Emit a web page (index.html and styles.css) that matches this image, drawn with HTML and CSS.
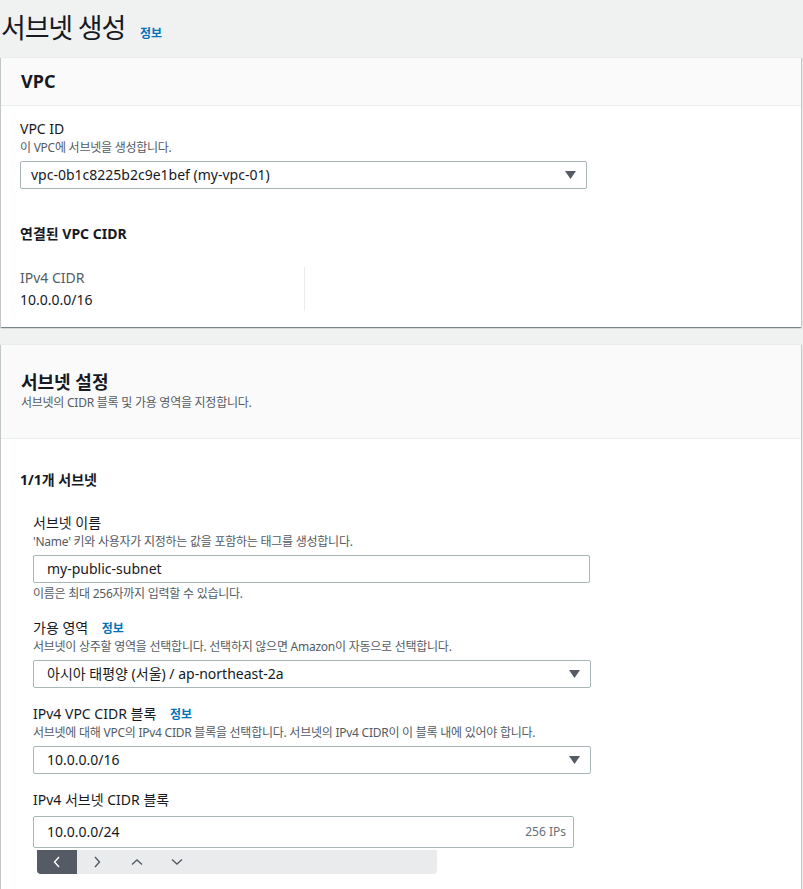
FILE: index.html
```html
<!DOCTYPE html>
<html lang="ko">
<head>
<meta charset="utf-8">
<title>서브넷 생성</title>
<link rel="stylesheet" href="styles.css">
</head>
<body>
<div class="page-header">
  <h1 class="page-title">서브넷 생성</h1>
  <a class="info-link" href="#">정보</a>
</div>

<section class="card card-vpc">
  <header class="card-header">
    <h2 class="card-title">VPC</h2>
  </header>
  <div class="card-body vpc-body">
    <div class="field">
      <div class="label">VPC ID</div>
      <div class="desc">이 VPC에 서브넷을 생성합니다.</div>
      <div class="select select-wide">
        <span>vpc-0b1c8225b2c9e1bef (my-vpc-01)</span>
        <svg class="caret" width="11" height="8" viewBox="0 0 11 8"><path d="M0 0H11L5.5 8Z" fill="#545b64"/></svg>
      </div>
    </div>
    <h3 class="sub-heading">연결된 VPC CIDR</h3>
    <div class="kv-grid">
      <div class="kv">
        <div class="kv-key">IPv4 CIDR</div>
        <div class="kv-value">10.0.0.0/16</div>
      </div>
      <div class="kv"></div>
    </div>
  </div>
</section>

<section class="card card-subnet">
  <header class="card-header header-desc">
    <h2 class="card-title">서브넷 설정</h2>
    <div class="desc">서브넷의 CIDR 블록 및 가용 영역을 지정합니다.</div>
  </header>
  <div class="card-body subnet-body">
    <h3 class="sub-heading">1/1개 서브넷</h3>
    <div class="subnet-fields">
      <div class="field">
        <div class="label">서브넷 이름</div>
        <div class="desc">'Name' 키와 사용자가 지정하는 값을 포함하는 태그를 생성합니다.</div>
        <div class="input">my-public-subnet</div>
        <div class="hint">이름은 최대 256자까지 입력할 수 있습니다.</div>
      </div>
      <div class="field">
        <div class="label">가용 영역 <a class="info-link" href="#">정보</a></div>
        <div class="desc">서브넷이 상주할 영역을 선택합니다. 선택하지 않으면 Amazon이 자동으로 선택합니다.</div>
        <div class="select">
          <span>아시아 태평양 (서울) / ap-northeast-2a</span>
          <svg class="caret" width="11" height="8" viewBox="0 0 11 8"><path d="M0 0H11L5.5 8Z" fill="#545b64"/></svg>
        </div>
      </div>
      <div class="field">
        <div class="label">IPv4 VPC CIDR 블록 <a class="info-link" href="#">정보</a></div>
        <div class="desc">서브넷에 대해 VPC의 IPv4 CIDR 블록을 선택합니다. 서브넷의 IPv4 CIDR이 이 블록 내에 있어야 합니다.</div>
        <div class="select">
          <span>10.0.0.0/16</span>
          <svg class="caret" width="11" height="8" viewBox="0 0 11 8"><path d="M0 0H11L5.5 8Z" fill="#545b64"/></svg>
        </div>
      </div>
      <div class="field field-cidr">
        <div class="label">IPv4 서브넷 CIDR 블록</div>
        <div class="input input-cidr">
          <span>10.0.0.0/24</span>
          <span class="ips">256 IPs</span>
        </div>
        <div class="toolbar">
          <div class="tb-btn active"><svg width="10" height="12" viewBox="0 0 10 12"><path d="M7 1L2.5 6L7 11" fill="none" stroke="#fff" stroke-width="1.4"/></svg></div>
          <div class="tb-btn"><svg width="10" height="12" viewBox="0 0 10 12"><path d="M3 1L7.5 6L3 11" fill="none" stroke="#545b64" stroke-width="1.4"/></svg></div>
          <div class="tb-btn"><svg width="12" height="10" viewBox="0 0 12 10"><path d="M1 7.5L6 3L11 7.5" fill="none" stroke="#545b64" stroke-width="1.4"/></svg></div>
          <div class="tb-btn"><svg width="12" height="10" viewBox="0 0 12 10"><path d="M1 2.5L6 7L11 2.5" fill="none" stroke="#545b64" stroke-width="1.4"/></svg></div>
        </div>
      </div>
    </div>
  </div>
</section>
</body>
</html>
```
FILE: styles.css
```css
* { box-sizing: border-box; }

body {
  margin: 0;
  background: #f0f1f1;
  color: #16191f;
  font-family: "Noto Sans", "Noto Sans CJK KR", sans-serif;
  font-size: 14px;
  line-height: 22px;
}

.page-header {
  display: flex;
  align-items: baseline;
  gap: 15px;
  height: 57px;
  padding-top: 10px;
}

.page-title {
  margin: 0 0 0 1px;
  font-size: 27px;
  font-weight: 400;
  line-height: 36px;
  letter-spacing: -1.2px;
}

.info-link {
  color: #0073bb;
  font-size: 12px;
  font-weight: 700;
  text-decoration: none;
  line-height: 16px;
  letter-spacing: 0;
}

.label .info-link { margin-left: 10px; }

.card {
  background: #fff;
  margin: 0 2px 17px 1px;
  border-top: 1px solid #eaeded;
  box-shadow: 0 1px 1px 0 rgba(0, 28, 36, 0.3), 1px 1px 1px 0 rgba(0, 28, 36, 0.15), -1px 1px 1px 0 rgba(0, 28, 36, 0.15);
}

.card-header {
  background: #fafafa;
  border-bottom: 1px solid #eaeded;
  padding: 11px 20px 12px;
}

.card-title {
  margin: 0;
  font-size: 18px;
  font-weight: 700;
  line-height: 24px;
}

.header-desc {
  padding: 24px 20px 27px;
}

.header-desc .card-title { line-height: 26px; }

.card-body { padding: 12px 19px 16px; }

.label { font-size: 14px; line-height: 22px; }

.desc {
  font-size: 12px;
  line-height: 16px;
  color: #545b64;
  letter-spacing: -0.25px;
}

.hint {
  font-size: 12px;
  line-height: 16px;
  color: #545b64;
  letter-spacing: -0.25px;
  margin-top: 3px;
}

.select, .input {
  display: flex;
  align-items: center;
  justify-content: space-between;
  height: 28px;
  margin-top: 5px;
  padding: 0 10px 0 10px;
  border: 1px solid #aab7b8;
  border-radius: 2px;
  background: #fff;
  font-size: 14px;
}

.select-wide { width: 567px; }

.caret { flex: none; }

.sub-heading {
  margin: 34px 0 0;
  font-size: 14px;
  font-weight: 700;
  line-height: 22px;
}

.kv-grid {
  display: grid;
  grid-template-columns: 285px 1fr;
  margin-top: 22px;
}

.kv { min-height: 44px; }

.kv:first-child { border-right: 1px solid #eaeded; }

.kv-key { color: #545b64; }

.subnet-body { padding: 30px 19px 17px; }

.subnet-body .sub-heading { margin-top: 0; }

.subnet-fields {
  padding-left: 13px;
  margin-top: 21px;
  display: flex;
  flex-direction: column;
  gap: 15px;
}

.subnet-fields .field { width: 558px; }

.subnet-fields .input,
.subnet-fields .select { padding-left: 13px; }

.subnet-fields .input { width: 557px; }

.input-cidr {
  width: 541px !important;
  height: 32px;
  padding-right: 7px !important;
}

.ips { color: #687078; font-size: 12px; }

.toolbar {
  display: flex;
  width: 400px;
  height: 24px;
  margin-left: 4px;
  margin-top: 2px;
  background: #e9ebed;
  border-radius: 0 0 4px 4px;
  overflow: hidden;
}

.tb-btn {
  width: 40px;
  display: flex;
  align-items: center;
  justify-content: center;
}

.tb-btn.active { background: #545b64; }
```
